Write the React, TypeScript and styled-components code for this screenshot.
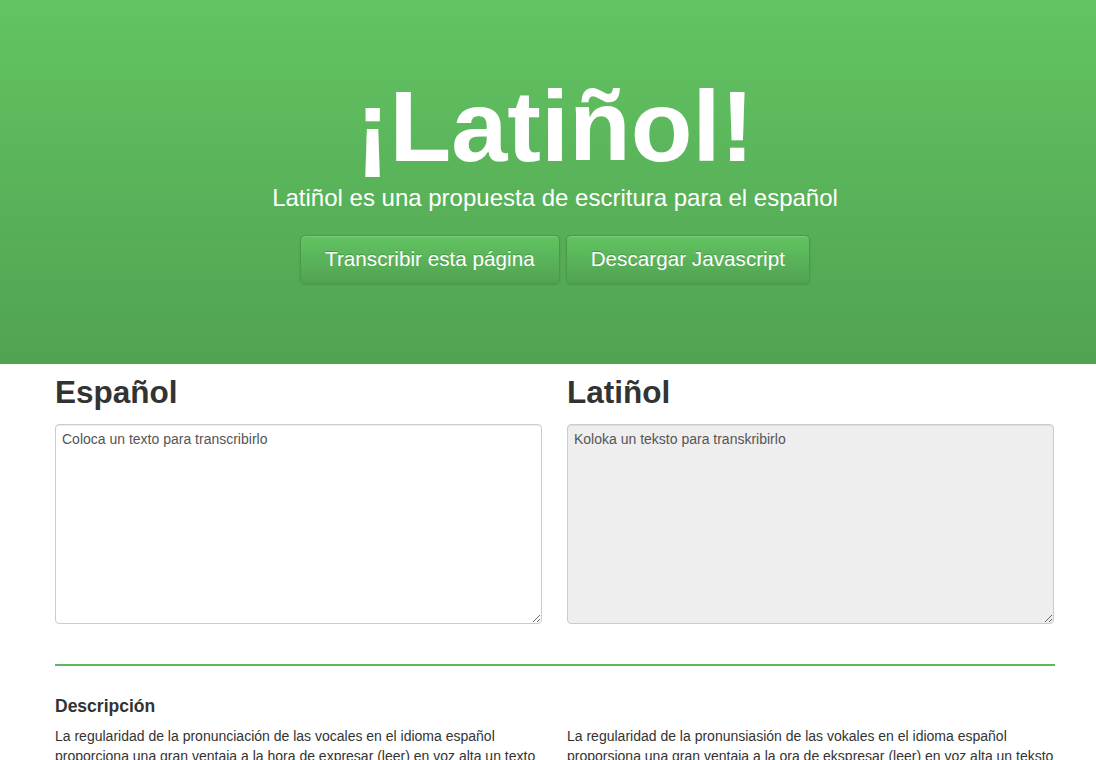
import React from 'react'
import styled, { createGlobalStyle } from 'styled-components'

const GlobalStyle = createGlobalStyle`
  * { box-sizing: border-box; }
  body {
    margin: 0;
    background: #fff;
    font-family: "Liberation Sans", Arial, sans-serif;
    font-size: 14px;
    line-height: 20px;
    color: #333;
  }
`

const Hero = styled.header`
  height: 364px;
  padding-top: 74px;
  background: linear-gradient(to bottom, #62c462 0%, #51a351 100%);
  color: #fff;
  text-align: center;
`

const Inner = styled.div`
  width: 1000px;
  margin-left: 55px;
`

const Title = styled.h1`
  margin: 0;
  font-size: 101px;
  line-height: 104px;
  font-weight: bold;
`

const Lead = styled.p`
  margin: 3px 0 20px;
  font-size: 24px;
  line-height: 33.6px;
`

const Actions = styled.div`
  display: flex;
  justify-content: center;
  gap: 6px;
`

const HeroButton = styled.button`
  height: 49px;
  padding: 0 24px;
  font-family: inherit;
  font-size: 20.7px;
  color: #fff;
  text-shadow: 0 -1px 0 rgba(0, 0, 0, 0.2);
  background: linear-gradient(to bottom, #62c462 0%, #51a351 100%);
  border: 1px solid #4a9a4a;
  border-radius: 5px;
  box-shadow: inset 0 1px 0 rgba(255, 255, 255, 0.15), 0 1px 2px rgba(0, 0, 0, 0.12);
  cursor: pointer;
`

const Columns = styled.div`
  display: grid;
  grid-template-columns: 487px 487px;
  column-gap: 25px;
`

const Heading = styled.h2`
  margin: 12px 0 15px;
  font-size: 31.5px;
  line-height: 33px;
  font-weight: bold;
  color: #333;
`

const TextBox = styled.textarea<{ $readOnly?: boolean }>`
  display: block;
  width: 100%;
  height: 200px;
  padding: 4px 6px;
  font-family: inherit;
  font-size: 14px;
  line-height: 20px;
  color: #555;
  background: ${p => (p.$readOnly ? '#eee' : '#fff')};
  border: 1px solid #ccc;
  border-radius: 4px;
  box-shadow: inset 0 1px 1px rgba(0, 0, 0, 0.075);
  resize: vertical;
`

const Rule = styled.hr`
  margin: 40px 0 30px;
  border: 0;
  border-top: 2px solid #5cb85c;
`

const SubHeading = styled.h4`
  margin: 0 0 10px;
  font-size: 17.5px;
  line-height: 20px;
  font-weight: bold;
  color: #333;
  min-height: 20px;
`

const Paragraph = styled.p`
  margin: 0 0 10px;
  font-size: 14px;
  line-height: 20px;
`

export default function App() {
  return (
    <>
      <GlobalStyle />
      <Hero>
        <Inner>
          <Title>¡Latiñol!</Title>
          <Lead>Latiñol es una propuesta de escritura para el español</Lead>
          <Actions>
            <HeroButton>Transcribir esta página</HeroButton>
            <HeroButton>Descargar Javascript</HeroButton>
          </Actions>
        </Inner>
      </Hero>
      <Inner>
        <Columns>
          <div>
            <Heading>Español</Heading>
            <TextBox defaultValue="Coloca un texto para transcribirlo" />
          </div>
          <div>
            <Heading>Latiñol</Heading>
            <TextBox $readOnly readOnly defaultValue="Koloka un teksto para transkribirlo" />
          </div>
        </Columns>
        <Rule />
        <Columns>
          <div>
            <SubHeading>Descripción</SubHeading>
            <Paragraph>
              La regularidad de la pronunciación de las vocales en el idioma español
              proporciona una gran ventaja a la hora de expresar (leer) en voz alta un texto
              escrito, sin embargo, la escritura de algunas consonantes no es tan regular.
            </Paragraph>
          </div>
          <div>
            <SubHeading>&nbsp;</SubHeading>
            <Paragraph>
              La regularidad de la pronunsiasión de las vokales en el idioma español
              proporsiona una gran ventaja a la ora de ekspresar (leer) en voz alta un teksto
              eskrito, sin embargo, la eskritura de algunas konsonantes no es tan regular.
            </Paragraph>
          </div>
        </Columns>
      </Inner>
    </>
  )
}
